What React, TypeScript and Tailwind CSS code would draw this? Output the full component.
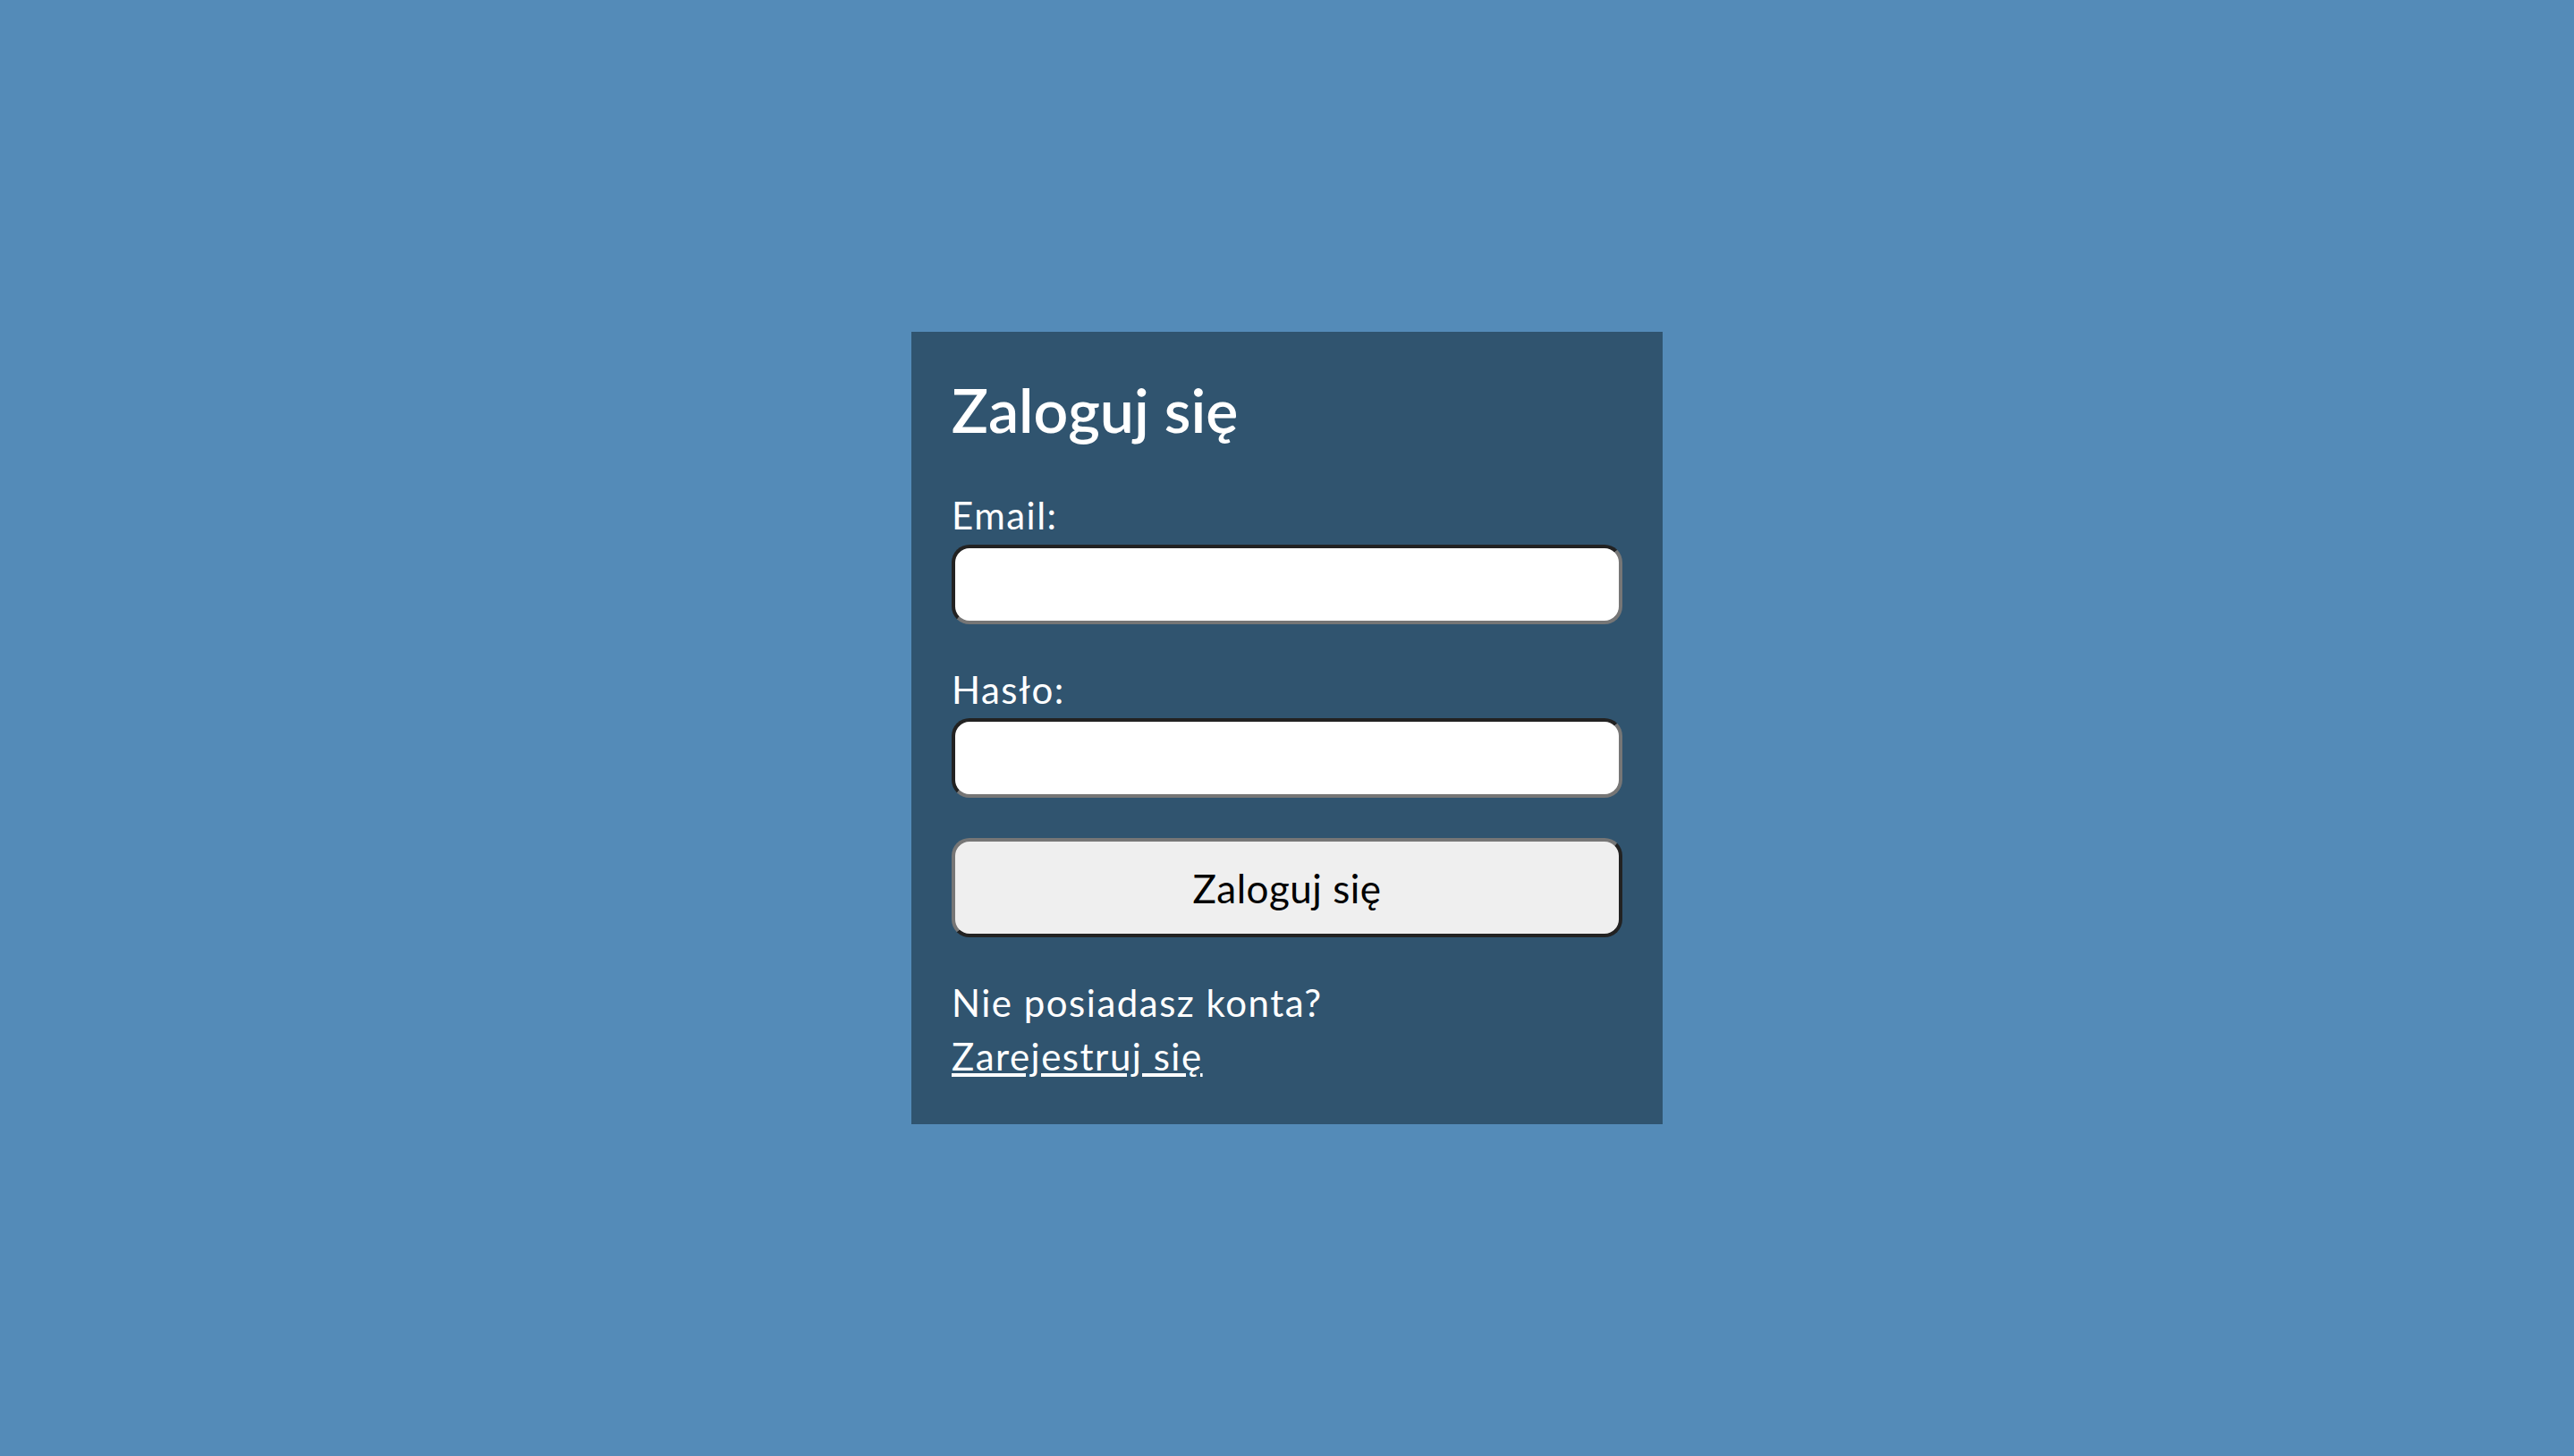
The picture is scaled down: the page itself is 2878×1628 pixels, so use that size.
import React from 'react';

const inputBorder =
    'block w-full h-[89px] rounded-[20px] border-4 border-solid border-t-[#222222] border-l-[#222222] border-b-[#767676] border-r-[#767676] bg-white px-4 text-[40px] outline-none';

const App = () => {
    return (
        <div className="min-h-screen w-full flex items-center justify-center bg-[#548bb8] font-['Lato','Liberation_Sans',sans-serif]">
            <div className="w-[840px] bg-[#30546f] px-[45px] pt-[45px] pb-[46px] text-white">
                <h1 className="text-[68px] leading-[83px] font-semibold">Zaloguj się</h1>

                <form onSubmit={e => e.preventDefault()}>
                    <label htmlFor="email" className="block mt-[47px] text-[42px] leading-[60px] tracking-[1.5px]">Email:</label>
                    <input id="email" type="email" className={`${inputBorder} mt-[3px]`} />

                    <label htmlFor="password" className="block mt-[43px] text-[42px] leading-[60px] tracking-[1.5px]">Hasło:</label>
                    <input id="password" type="password" className={`${inputBorder} mt-[2px]`} />

                    <button
                        type="submit"
                        className="mt-[45px] block w-full h-[111px] rounded-[20px] border-4 border-solid border-t-[#767676] border-l-[#767676] border-b-[#222222] border-r-[#222222] bg-[#efefef] text-black text-[44px] tracking-[0.5px]"
                    >
                        Zaloguj się
                    </button>
                </form>

                <p className="mt-[43px] text-[42px] leading-[60px] tracking-[1.5px]">
                    Nie posiadasz konta?
                    <br />
                    <a href="#" className="underline">Zarejestruj się</a>
                </p>
            </div>
        </div>
    );
};

export default App;
